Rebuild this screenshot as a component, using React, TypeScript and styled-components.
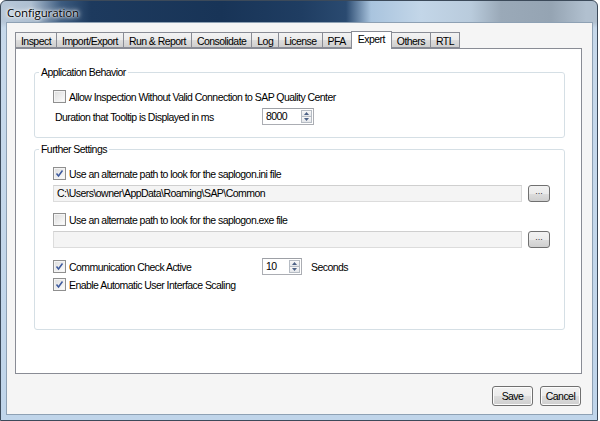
import React from "react";
import styled, { createGlobalStyle } from "styled-components";

const Global = createGlobalStyle`
  html, body { margin: 0; padding: 0; background: #ffffff; }
  body { width: 600px; height: 421px; overflow: hidden; }
  * { box-sizing: border-box; }
`;

const FONT = `"Liberation Sans", Arial, sans-serif`;

const Window = styled.div`
  width: 598px;
  height: 421px;
  display: flex;
  flex-direction: column;
  border: 1px solid #3c4a5a;
  border-radius: 6px 6px 0 0;
  overflow: hidden;
  background: linear-gradient(90deg, #b8c8d9 0px, #aebfd1 30px, #3d5c80 60px, #1d3a5e 90px, #183457 220px, #1f3d62 300px, #2a4a70 345px, #a9c4de 370px, #c3d6e8 420px, #b9cbdc 470px, #9aa9b8 500px, #95a4b3 550px, #b1c0cf 585px);
  font-family: ${FONT};
  font-size: 10.5px;
  letter-spacing: -0.55px;
`;

const TitleBar = styled.div`
  height: 21px;
  flex: none;
  display: flex;
  align-items: center;
  padding-left: 6px;
  padding-top: 1px;
`;

const TitleText = styled.span`
  font-family: "Open Sans", "Liberation Sans", sans-serif;
  font-size: 11.5px;
  letter-spacing: -0.1px;
  color: #000;
  text-shadow: 0 0 6px #ffffff, 0 0 4px #ffffff, 0 0 2px #ffffff;
`;

const Frame = styled.div`
  flex: 1;
  display: flex;
  padding: 0 4px 5px 5px;
  background: linear-gradient(180deg, rgba(190,210,230,0.0) 0px, rgba(200,218,236,0.9) 6px, #c7d9eb 40px, #c0d5ea 100%);
`;

const Client = styled.div`
  flex: 1;
  display: flex;
  flex-direction: column;
  background: #f5f5f5;
  border: 1px solid #8ea1b4;
  padding: 9px 10px 8px 8px;
`;

const TabStrip = styled.div`
  display: flex;
  align-items: flex-end;
  height: 16px;
  position: relative;
  z-index: 1;
`;

const Tab = styled.div<{ $active?: boolean }>`
  height: ${(p) => (p.$active ? "18px" : "16px")};
  margin-bottom: ${(p) => (p.$active ? "-1px" : "0")};
  padding: ${(p) => (p.$active ? "1px 6px 0" : "2px 5px 0")};
  border: 1px solid #898c95;
  border-bottom: ${(p) => (p.$active ? "none" : "1px solid #898c95")};
  margin-right: -1px;
  background: ${(p) =>
    p.$active ? "#ffffff" : "linear-gradient(180deg, #f3f3f3 0%, #ebebeb 50%, #dddddd 51%, #cfcfcf 100%)"};
  color: #000;
  line-height: 12px;
  white-space: nowrap;
  position: relative;
  z-index: ${(p) => (p.$active ? 2 : 1)};
`;

const Panel = styled.div`
  height: 326px;
  background: #ffffff;
  border: 1px solid #898c95;
  padding: 17px 16px 0 18px;
  display: flex;
  flex-direction: column;
  gap: 5px;
`;

const Group = styled.fieldset<{ $h: number }>`
  margin: 0;
  height: ${(p) => p.$h}px;
  border: 1px solid #d5dfe5;
  border-radius: 3px;
  padding: 6px 14px 0 18px;
  display: flex;
  flex-direction: column;
`;

const Legend = styled.legend`
  line-height: 13px;
  padding: 0 2px;
  margin-left: -14px;
  color: #000;
`;

const Row = styled.div<{ $mt?: number }>`
  display: grid;
  grid-template-columns: 200px max-content max-content;
  justify-content: start;
  align-items: center;
  column-gap: 9px;
  height: 17px;
  margin-top: ${(p) => p.$mt ?? 0}px;
  color: #000;
`;

const CheckLabel = styled.label`
  display: flex;
  align-items: center;
  gap: 2px;
  white-space: nowrap;
  grid-column: 1 / -1;
`;

const CheckCell = styled(CheckLabel)`
  grid-column: 1;
`;

const Box = styled.span`
  width: 13px;
  height: 13px;
  flex: none;
  border: 1px solid #8f8f8f;
  background: linear-gradient(135deg, #dcdcdc 0%, #f0f0f0 60%, #ffffff 100%);
  box-shadow: inset 0 0 0 1px #f4f4f4;
  display: flex;
  align-items: center;
  justify-content: center;
  margin-right: 1px;
`;

const PlainLabel = styled.span`
  padding-left: 2px;
  white-space: nowrap;
`;

const Spinner = styled.div<{ $w: number }>`
  width: ${(p) => p.$w}px;
  height: 17px;
  border: 1px solid #abadb3;
  border-top-color: #9da0a6;
  background: #fff;
  display: flex;
  align-items: stretch;
`;

const SpinValue = styled.span`
  flex: 1;
  padding-left: 3px;
  line-height: 15px;
`;

const SpinArrows = styled.div`
  width: 11px;
  display: flex;
  flex-direction: column;
  margin: 1px 1px 1px 0;
`;

const SpinArrow = styled.div`
  flex: 1;
  border: 1px solid #b6bcc4;
  background: linear-gradient(180deg, #f8f8f8, #e4e6ea);
  display: flex;
  align-items: center;
  justify-content: center;
  & + & { margin-top: -1px; }
`;

const FieldRow = styled.div`
  display: flex;
  gap: 6px;
  height: 17px;
  margin-top: 3px;
`;

const TextField = styled.div`
  flex: 1;
  border: 1px solid #dcdcdc;
  border-top-color: #cfcfcf;
  background: #f4f4f4;
  line-height: 15px;
  padding-left: 3px;
  color: #000;
  white-space: nowrap;
`;

const SmallButton = styled.div`
  width: 22px;
  border: 1px solid #707070;
  border-radius: 3px;
  background: linear-gradient(180deg, #f2f2f2 0%, #ebebeb 50%, #dddddd 51%, #cfcfcf 100%);
  font-size: 9px;
  letter-spacing: 0;
  line-height: 11px;
  text-align: center;
  color: #333;
`;

const Footer = styled.div`
  flex: 1;
  display: flex;
  justify-content: flex-end;
  align-items: flex-end;
  gap: 7px;
  padding-right: 1px;
`;

const Button = styled.div`
  width: 41px;
  height: 20px;
  border: 1px solid #707070;
  border-radius: 3px;
  background: linear-gradient(180deg, #f2f2f2 0%, #ebebeb 50%, #dddddd 51%, #cfcfcf 100%);
  box-shadow: inset 0 0 0 1px #fcfcfc;
  line-height: 18px;
  text-align: center;
  color: #000;
`;

const Check = ({ on }: { on?: boolean }) => (
  <Box>
    {on && (
      <svg width="9" height="9" viewBox="0 0 9 9">
        <path d="M1.5 4.5 L3.5 7 L7.5 1.5" fill="none" stroke="#3d5a9e" strokeWidth="1.5" />
      </svg>
    )}
  </Box>
);

const Spin = ({ w, v }: { w: number; v: string }) => (
  <Spinner $w={w}>
    <SpinValue>{v}</SpinValue>
    <SpinArrows>
      <SpinArrow>
        <svg width="5" height="3" viewBox="0 0 5 3"><path d="M0 3 L2.5 0 L5 3Z" fill="#4d6185" /></svg>
      </SpinArrow>
      <SpinArrow>
        <svg width="5" height="3" viewBox="0 0 5 3"><path d="M0 0 L2.5 3 L5 0Z" fill="#4d6185" /></svg>
      </SpinArrow>
    </SpinArrows>
  </Spinner>
);

const tabs = ["Inspect", "Import/Export", "Run & Report", "Consolidate", "Log", "License", "PFA", "Expert", "Others", "RTL"];

export default function App() {
  return (
    <>
      <Global />
      <Window>
        <TitleBar>
          <TitleText>Configuration</TitleText>
        </TitleBar>
        <Frame>
          <Client>
            <TabStrip>
              {tabs.map((t) => (
                <Tab key={t} $active={t === "Expert"}>{t}</Tab>
              ))}
            </TabStrip>
            <Panel>
              <Group $h={72}>
                <Legend>Application Behavior</Legend>
                <Row $mt={3}>
                  <CheckLabel><Check />Allow Inspection Without Valid Connection to SAP Quality Center</CheckLabel>
                </Row>
                <Row $mt={3}>
                  <PlainLabel>Duration that Tooltip is Displayed in ms</PlainLabel>
                  <Spin w={52} v="8000" />
                </Row>
              </Group>
              <Group $h={187}>
                <Legend>Further Settings</Legend>
                <Row $mt={3}>
                  <CheckLabel><Check on />Use an alternate path to look for the saplogon.ini file</CheckLabel>
                </Row>
                <FieldRow>
                  <TextField>C:\Users\owner\AppData\Roaming\SAP\Common</TextField>
                  <SmallButton>...</SmallButton>
                </FieldRow>
                <Row $mt={9}>
                  <CheckLabel><Check />Use an alternate path to look for the saplogon.exe file</CheckLabel>
                </Row>
                <FieldRow>
                  <TextField />
                  <SmallButton>...</SmallButton>
                </FieldRow>
                <Row $mt={10}>
                  <CheckCell><Check on />Communication Check Active</CheckCell>
                  <Spin w={40} v="10" />
                  <span>Seconds</span>
                </Row>
                <Row $mt={1}>
                  <CheckLabel><Check on />Enable Automatic User Interface Scaling</CheckLabel>
                </Row>
              </Group>
            </Panel>
            <Footer>
              <Button>Save</Button>
              <Button>Cancel</Button>
            </Footer>
          </Client>
        </Frame>
      </Window>
    </>
  );
}
